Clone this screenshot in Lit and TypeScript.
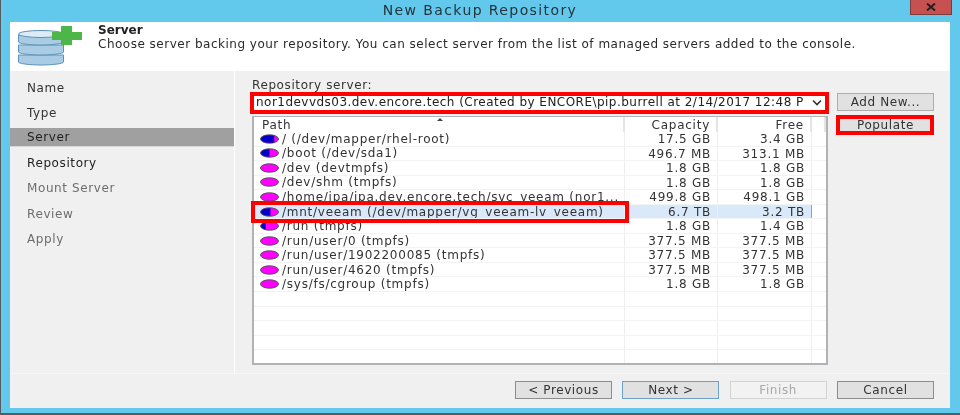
import { LitElement, html, css, svg } from 'lit';
import { customElement } from 'lit/decorators.js';

// blue share of each disk icon, 0 = all magenta
const rows = [
  { path: '/ (/dev/mapper/rhel-root)', cap: '17.5 GB', free: '3.4 GB', used: 0.75 },
  { path: '/boot (/dev/sda1)', cap: '496.7 MB', free: '313.1 MB', used: 0.5 },
  { path: '/dev (devtmpfs)', cap: '1.8 GB', free: '1.8 GB', used: 0 },
  { path: '/dev/shm (tmpfs)', cap: '1.8 GB', free: '1.8 GB', used: 0 },
  { path: '/home/ipa/ipa.dev.encore.tech/svc_veeam (nor1...', cap: '499.8 GB', free: '498.1 GB', used: 0 },
  { path: '/mnt/veeam (/dev/mapper/vg_veeam-lv_veeam)', cap: '6.7 TB', free: '3.2 TB', used: 0.55, selected: true },
  { path: '/run (tmpfs)', cap: '1.8 GB', free: '1.4 GB', used: 0.3 },
  { path: '/run/user/0 (tmpfs)', cap: '377.5 MB', free: '377.5 MB', used: 0 },
  { path: '/run/user/1902200085 (tmpfs)', cap: '377.5 MB', free: '377.5 MB', used: 0 },
  { path: '/run/user/4620 (tmpfs)', cap: '377.5 MB', free: '377.5 MB', used: 0 },
  { path: '/sys/fs/cgroup (tmpfs)', cap: '1.8 GB', free: '1.8 GB', used: 0 },
  { path: '', cap: '', free: '', used: 0 },
  { path: '', cap: '', free: '', used: 0 },
  { path: '', cap: '', free: '', used: 0 },
  { path: '', cap: '', free: '', used: 0 },
  { path: '', cap: '', free: '', used: 0 },
];

const steps = [
  { label: 'Name', cls: 'done' },
  { label: 'Type', cls: 'done' },
  { label: 'Server', cls: 'current' },
  { label: 'Repository', cls: 'next' },
  { label: 'Mount Server', cls: 'off' },
  { label: 'Review', cls: 'off' },
  { label: 'Apply', cls: 'off' },
];

@customElement('app-root')
export class AppRoot extends LitElement {
  static styles = css`
    :host {
      display: block;
      width: 960px;
      height: 415px;
      overflow: hidden;
      font-family: "DejaVu Sans", sans-serif;
      font-size: 12px;
      color: #333;
    }
    .window {
      position: relative;
      box-sizing: border-box;
      width: 960px;
      height: 415px;
      background: #63c9ec;
      border-left: 1px solid #555c62;
      border-bottom: 2px solid #555c62;
      display: flex;
      flex-direction: column;
      padding: 0 10px 5px 9px;
    }
    .titlebar {
      height: 22px;
      flex: none;
      display: flex;
      justify-content: center;
      align-items: center;
      padding-bottom: 3px;
      box-sizing: border-box;
      font-size: 14px;
      letter-spacing: 1.4px;
      color: #24343c;
      filter: blur(0.4px);
    }
    .close {
      position: absolute;
      top: 0;
      left: 909px;
      width: 42px;
      height: 15px;
      box-sizing: border-box;
      background: #c75050;
      border: 1px solid #7d3c3c;
      border-top: none;
      display: flex;
      justify-content: center;
      align-items: center;
    }
    .body {
      flex: 1;
      min-height: 0;
      display: flex;
      flex-direction: column;
      background: #f0f0f0;
      filter: blur(0.4px);
    }
    .header {
      height: 49px;
      flex: none;
      background: #fff;
      display: flex;
      padding-left: 8px;
      box-sizing: border-box;
    }
    .header svg {
      flex: none;
      margin-top: 4px;
    }
    .header-text {
      margin-left: 16px;
      padding-top: 1px;
      line-height: 14px;
      letter-spacing: 0.5px;
      color: #2a2a2a;
      white-space: nowrap;
    }
    .header-text b {
      display: block;
      font-weight: 700;
      color: #222;
      letter-spacing: 0;
    }
    .middle {
      flex: 1;
      min-height: 0;
      display: flex;
    }
    .sidebar {
      width: 224px;
      flex: none;
      border-right: 1px solid #fff;
      padding-top: 5px;
      letter-spacing: 0.6px;
    }
    .step {
      height: 25.3px;
      line-height: 24px;
      padding-left: 17px;
    }
    .step.current {
      background: #a0a0a0;
      border-bottom: 1px solid #d8d8d8;
      box-sizing: border-box;
      color: #222;
      height: 19px;
      line-height: 18px;
      margin: 1.4px 0 4px;
    }
    .step.next { color: #222; }
    .step.off { color: #6d6d6d; }
    .main {
      flex: 1;
      min-width: 0;
      padding: 7px 16px 8px 17px;
      display: flex;
      flex-direction: column;
      box-sizing: border-box;
    }
    .label {
      height: 14px;
      line-height: 14px;
      letter-spacing: 0.6px;
    }
    .server {
      display: grid;
      grid-template-columns: 576px 97px;
      column-gap: 9px;
      flex: 1;
      min-height: 0;
    }
    .left {
      display: flex;
      flex-direction: column;
      min-height: 0;
    }
    .combo {
      height: 17px;
      margin-top: 2px;
      line-height: 17px;
      display: flex;
      align-items: center;
      background: #fff;
      padding-left: 4px;
      color: #222;
      white-space: nowrap;
      overflow: hidden;
      flex: none;
      letter-spacing: 0.47px;
    }
    .combo span {
      width: 547px;
      overflow: hidden;
    }
    .combo svg { margin-left: 9px; flex: none; }
    .table {
      margin-top: 5px;
      flex: 1;
      min-height: 0;
      box-sizing: border-box;
      border-style: solid;
      border-width: 1px 2px 2px 2px;
      border-color: #b0b2b5;
      background: #fff;
      overflow: hidden;
      letter-spacing: 0.75px;
    }
    .tr {
      display: grid;
      grid-template-columns: 371px 93px 94px 1fr;
      height: 14.55px;
      line-height: 14px;
      border-bottom: 1px solid #f3f3f3;
      box-sizing: border-box;
      white-space: nowrap;
    }
    .tr.head {
      height: 15px;
      border-bottom: none;
      position: relative;
    }
    .tr > div {
      border-right: 1px solid #eee;
      overflow: hidden;
    }
    .tr.head > div {
      border-right: 2px solid #e4e4e4;
      padding-top: 1px;
    }
    .tr > div:last-child { border-right: none; }
    .path {
      display: flex;
      align-items: center;
      padding-left: 6px;
      gap: 3px;
    }
    .path svg { flex: none; }
    .tr.head .path { padding-left: 8px; }
    .num {
      text-align: right;
      padding-right: 6px;
    }
    .tr.selected > div { background: #d9e9fb; }
    .tr.selected > .free { border-right: 1px solid #7fa7d6; }
    .tr.selected > div:last-child { background: #fff; }
    .sort {
      position: absolute;
      top: 1px;
      left: 183px;
      width: 0;
      height: 0;
      border: 3px solid transparent;
      border-top: none;
      border-bottom: 3px solid #444;
    }
    .side-btns {
      display: flex;
      flex-direction: column;
      padding-top: 1px;
      gap: 5px;
    }
    .btn {
      height: 18px;
      box-sizing: border-box;
      border: 1px solid #adadad;
      background: #e1e1e1;
      text-align: center;
      line-height: 16px;
      letter-spacing: 0.6px;
      color: #333;
    }
    .footer {
      height: 35px;
      flex: none;
      border-top: 1px solid #f7f7f7;
      box-sizing: border-box;
      display: flex;
      justify-content: flex-end;
      gap: 10.33px;
      padding: 7px 16px 0 0;
    }
    .footer .btn { width: 97px; border-color: #8d8d8d; }
    .footer .btn.default { border-color: #6fa1c8; }
    .footer .btn.disabled { background: #f2f2f2; border-color: #d4d4d4; color: #a8a8a8; }
    .mark {
      position: absolute;
      box-sizing: border-box;
      border: 4px solid #f00;
      pointer-events: none;
    }
    .mark.combo-mark { left: 249px; top: 92px; width: 579px; height: 22px; }
    .mark.btn-mark { left: 835px; top: 115px; width: 98px; height: 20px; }
    .mark.row-mark { left: 250px; top: 201px; width: 378px; height: 22px; }
  `;

  diskIcon(used: number) {
    const id = `c${Math.round(used * 100)}`;
    return html`<svg width="19" height="10" viewBox="0 0 19 10">
      <ellipse cx="9.5" cy="5" rx="9" ry="4.2" fill="#f0f" stroke="#555" stroke-width="1"></ellipse>
      ${used > 0
        ? svg`<clipPath id="${id}"><rect x="0" y="0" width="${19 * used}" height="10"></rect></clipPath>
          <ellipse cx="9.5" cy="5" rx="8.5" ry="3.8" fill="#0000c8" clip-path="url(#${id})"></ellipse>`
        : ''}
    </svg>`;
  }

  logo() {
    return html`<svg width="64" height="40" viewBox="0 0 64 40">
      <g fill="#a9cbe3" stroke="#5b93b8" stroke-width="1">
        <path d="M0.5 29h45v7c0 1.500-10 3-22.500 3s-22.500-1.500-22.500-3z"></path>
        <path d="M0.500 19h45v7c0 1.500-10 3-22.500 3s-22.500-1.500-22.500-3z"></path>
        <path d="M0.500 9h45v7c0 1.500-10 3-22.500 3s-22.500-1.500-22.500-3z"></path>
      </g>
      <ellipse cx="23" cy="8" rx="22.500" ry="3.500" fill="#dcebf5" stroke="#5b93b8"></ellipse>
      <path d="M43 0h11v6h10v8H54v5H43v-5h-9V6h9z" fill="#4cb648"></path>
    </svg>`;
  }

  render() {
    return html`
      <div class="window">
        <div class="titlebar">New Backup Repository</div>
        <div class="close">
          <svg width="10" height="8" viewBox="0 0 10 8"><path d="M1 0.500L9 7.500M9 0.500L1 7.500" stroke="#222" stroke-width="2"></path></svg>
        </div>
        <div class="body">
          <div class="header">
            ${this.logo()}
            <div class="header-text">
              <b>Server</b>
              Choose server backing your repository. You can select server from the list of managed servers added to the console.
            </div>
          </div>
          <div class="middle">
            <div class="sidebar">
              ${steps.map((s) => html`<div class="step ${s.cls}">${s.label}</div>`)}
            </div>
            <div class="main">
              <div class="label">Repository server:</div>
              <div class="server">
                <div class="left">
                  <div class="combo">
                    <span>nor1devvds03.dev.encore.tech (Created by ENCORE\\pip.burrell at 2/14/2017 12:48 PM)</span>
                    <svg width="10" height="7" viewBox="0 0 10 7"><path d="M1 1.500L5 5.500L9 1.500" fill="none" stroke="#333" stroke-width="1.600"></path></svg>
                  </div>
                  <div class="table">
                    <div class="tr head">
                      <div class="path">Path</div>
                      <div class="num">Capacity</div>
                      <div class="num">Free</div>
                      <div></div>
                      <span class="sort"></span>
                    </div>
                    ${rows.map(
                      (r) => html`<div class="tr ${r.selected ? 'selected' : ''}">
                        <div class="path">${r.path ? this.diskIcon(r.used) : ''}${r.path}</div>
                        <div class="num">${r.cap}</div>
                        <div class="num free">${r.free}</div>
                        <div></div>
                      </div>`
                    )}
                  </div>
                </div>
                <div class="side-btns">
                  <div class="btn">Add New...</div>
                  <div class="btn">Populate</div>
                </div>
              </div>
            </div>
          </div>
          <div class="footer">
            <div class="btn">&lt; Previous</div>
            <div class="btn default">Next &gt;</div>
            <div class="btn disabled">Finish</div>
            <div class="btn">Cancel</div>
          </div>
        </div>
        <div class="mark combo-mark"></div>
        <div class="mark btn-mark"></div>
        <div class="mark row-mark"></div>
      </div>
    `;
  }
}
